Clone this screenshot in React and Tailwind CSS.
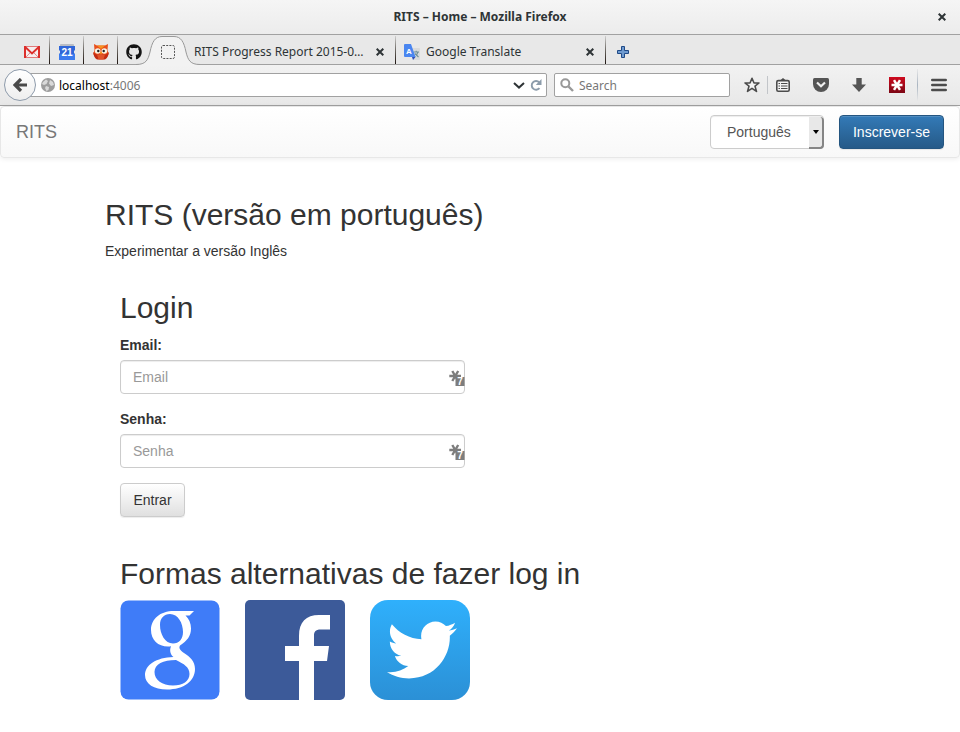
import React from "react";
import { FaGithub, FaTwitter } from "react-icons/fa";

function TabDivider() {
  return <span className="h-7 w-px shrink-0 bg-linear-to-b from-[#cfcfcf] via-[#6b6762] to-[#1f1611]" />;
}

function CloseIcon({ className }) {
  return (
    <svg viewBox="0 0 8 8" className={className} aria-hidden="true">
      <path d="M.7 .7L7.3 7.3M7.3 .7L.7 7.3" stroke="currentColor" strokeWidth="2" fill="none" />
    </svg>
  );
}

function GmailIcon() {
  return (
    <svg viewBox="0 0 16 12" className="h-3 w-4" aria-hidden="true">
      <rect width="16" height="12" rx="1" fill="#f6eeee" />
      <path d="M.3 .5H15.7M.3 11.5H15.7" stroke="#e2797a" strokeWidth="1" />
      <path d="M2 11L6.3 6.6M14 11L9.7 6.6" stroke="#e08a8a" strokeWidth="1" />
      <path d="M1 0V12M15 0V12" stroke="#dc2f2b" strokeWidth="2" />
      <path d="M1.2 1L8 7.4L14.8 1" stroke="#dc2f2b" strokeWidth="1.9" fill="none" />
    </svg>
  );
}

function CalendarIcon() {
  return (
    <svg viewBox="0 0 16 16" className="size-4" aria-hidden="true">
      <rect x="1" y="0" width="14" height="4" rx="1" fill="#b9bdc4" />
      <path d="M0 2H16V6L15 7V9L16 10V15Q16 16 15 16H1Q0 16 0 15V10L1 9V7L0 6Z" fill="#2f66d8" />
      <path d="M0 10H16V15Q16 16 15 16H1Q0 16 0 15Z" fill="#3c7bee" />
      <text x="8" y="12" textAnchor="middle" fontSize="10" fontWeight="700" fill="#fff" fontFamily="Liberation Sans, sans-serif">21</text>
    </svg>
  );
}

function OwlIcon() {
  return (
    <svg viewBox="0 0 16 16" className="size-4" aria-hidden="true">
      <path d="M1 0L4 1.5H12L15 0L14.5 6L15.5 10L13.5 14H2.5L.5 10L1.5 6Z" fill="#e8501c" />
      <path d="M4 1.5L8 5L12 1.5Z" fill="#f7931e" />
      <path d="M0 8Q1 14 4 15.5H12Q15 14 16 8L13 10.5H3Z" fill="#c22a12" />
      <path d="M4 10.5H12L10.5 15.5H5.5Z" fill="#e0532a" />
      <circle cx="4.7" cy="7" r="2.8" fill="#fbf3e4" />
      <circle cx="11.3" cy="7" r="2.8" fill="#fbf3e4" />
      <circle cx="5.3" cy="7" r="1.2" fill="#222" />
      <circle cx="10.7" cy="7" r="1.2" fill="#222" />
      <path d="M7 8H9L8 11Z" fill="#f5a623" />
    </svg>
  );
}

function TranslateIcon() {
  return (
    <svg viewBox="0 0 16 16" className="size-4" aria-hidden="true">
      <path d="M7 4H15Q16 4 16 5V15Q16 16 15 16H9Z" fill="#d9dadb" />
      <path d="M9.5 8H15M12.2 6.8V8M14 8Q13 11.5 10 13M10.8 9.5L14.5 13" stroke="#6f8f98" strokeWidth="1.1" fill="none" />
      <path d="M8 13H11.5L9 16Z" fill="#2f4fb8" />
      <path d="M1 0H7L11.5 13H1Q0 13 0 12V1Q0 0 1 0Z" fill="#4a86f0" />
      <text x="4.8" y="9.5" textAnchor="middle" fontSize="8" fontWeight="700" fill="#fff" fontFamily="Liberation Sans, sans-serif">A</text>
    </svg>
  );
}

function TabStrip() {
  return (
    <div className="flex h-[30px] items-center border-b border-[#a1a1a1] bg-[#e8e8e8] text-xs text-[#2e3436]">
      <button aria-label="Gmail" className="flex w-[49px] shrink-0 justify-end pt-1 pr-[9px]"><GmailIcon /></button>
      <TabDivider />
      <button aria-label="Calendar" className="flex w-[33px] shrink-0 justify-center pt-1"><CalendarIcon /></button>
      <TabDivider />
      <button aria-label="Hootsuite" className="flex w-[33px] shrink-0 justify-center pt-1"><OwlIcon /></button>
      <TabDivider />
      <button aria-label="GitHub" className="flex w-8 shrink-0 justify-center pt-1 text-[#141414]"><FaGithub className="size-4" /></button>
      <button aria-label="RITS" className="relative flex h-[30px] w-9 shrink-0 items-center justify-center pt-1">
        <svg viewBox="0 0 64 30" className="absolute -left-3.5 top-0 h-[30px] w-16 max-w-none" aria-hidden="true">
          <path d="M0 29.5C10 29.5 12 25 14 17C16 7 19 1.5 26 1.5H38C45 1.5 48 7 50 17C52 25 54 29.5 64 29.5V30H0Z" fill="#f2f2f2" />
          <path d="M0 29.5C10 29.5 12 25 14 17C16 7 19 1.5 26 1.5H38C45 1.5 48 7 50 17C52 25 54 29.5 64 29.5" fill="none" stroke="#999" />
        </svg>
        <svg viewBox="0 0 14 14" className="relative size-3.5" aria-hidden="true">
          <rect x=".5" y=".5" width="13" height="13" rx="1.5" fill="none" stroke="#555" strokeDasharray="2 1.2" />
        </svg>
      </button>
      <div className="flex w-[209px] shrink-0 items-center pt-1 pl-2">
        <span className="min-w-0 flex-1 truncate">RITS Progress Report 2015-0…</span>
        <button aria-label="Close tab" className="mx-[11px]"><CloseIcon className="size-2" /></button>
      </div>
      <TabDivider />
      <div className="flex w-[209px] shrink-0 items-center pt-1 pl-2">
        <TranslateIcon />
        <span className="ml-1.5 min-w-0 flex-1 truncate">Google Translate</span>
        <button aria-label="Close tab" className="mx-[11px]"><CloseIcon className="size-2" /></button>
      </div>
      <TabDivider />
      <button aria-label="New tab" className="ml-[11px] pt-1">
        <svg viewBox="0 0 12 12" className="size-3" aria-hidden="true">
          <path d="M4.5 .5H7.5V4.5H11.5V7.5H7.5V11.5H4.5V7.5H.5V4.5H4.5Z" fill="#6f9bd0" stroke="#204a87" />
        </svg>
      </button>
    </div>
  );
}

function Toolbar() {
  return (
    <div className="flex h-[41px] items-center border-b border-[#a1a1a1] bg-linear-to-b from-[#f2f2f2] to-[#e8e8e8] pl-1 text-xs text-[#4c4c4c]">
      <button aria-label="Back" className="z-10 flex size-8 shrink-0 items-center justify-center rounded-full border border-[#8e9bab] bg-linear-to-b from-white to-[#eeeeee]">
        <svg viewBox="0 0 14 14" className="size-3.5" aria-hidden="true">
          <path d="M8 1L2 7L8 13M2.5 7H14" fill="none" stroke="#4a4a4a" strokeWidth="3.2" />
        </svg>
      </button>
      <div className="-ml-2 flex h-6 min-w-0 flex-1 items-center rounded-r-xs border border-[#a1a1a1] bg-white pl-3">
        <svg viewBox="0 0 14 14" className="size-3.5 shrink-0" aria-hidden="true">
          <circle cx="7" cy="7" r="7" fill="#9d9d9d" />
          <path d="M2 4L5 1.5L7 3L5.5 6L3 7L1 6ZM9 2L12 4L13 7L10 8L8 5.5ZM5 8L8 9L7.5 12L5.5 13L4 10Z" fill="#d9d9d9" />
        </svg>
        <span className="ml-1 flex-1 pt-0.5 text-[#777]"><span className="text-black">localhost</span>:4006</span>
        <svg viewBox="0 0 12 7" className="h-[7px] w-3" aria-hidden="true">
          <path d="M1 1L6 5.6L11 1" fill="none" stroke="#2e3436" strokeWidth="2" />
        </svg>
        <button aria-label="Reload" className="mr-1 ml-[5px]">
          <svg viewBox="0 0 12 12" className="size-3" aria-hidden="true">
            <path d="M9.5 9.2A4.4 4.4 0 1 1 9.2 3.2" fill="none" stroke="#8c9cab" strokeWidth="1.9" />
            <path d="M11.5 0V6H5.8Z" fill="#8c9cab" />
          </svg>
        </button>
      </div>
      <label className="ml-[7px] flex h-6 w-44 shrink-0 items-center rounded-xs border border-[#a1a1a1] bg-white pl-[5px]">
        <svg viewBox="0 0 14 14" className="size-3.5 shrink-0" aria-hidden="true">
          <circle cx="5.3" cy="5.3" r="4" fill="none" stroke="#999" strokeWidth="2" />
          <path d="M8.5 8.5L13 13" stroke="#999" strokeWidth="2.4" />
        </svg>
        <input aria-label="Search" placeholder="Search" className="ml-[5px] w-full min-w-0 pt-0.5 outline-none placeholder:text-[#777]" />
      </label>
      <button aria-label="Bookmark" className="ml-3.5">
        <svg viewBox="0 0 16 16" className="size-4" aria-hidden="true">
          <path d="M8 1.3L10 6H15L11 9.2L12.5 14.4L8 11.4L3.5 14.4L5 9.2L1 6H6Z" fill="#f4f4f4" stroke="#4c4c4c" strokeWidth="1.6" strokeLinejoin="round" />
        </svg>
      </button>
      <span className="ml-[7px] h-[18px] w-px bg-[#c2c5c9]" />
      <button aria-label="Bookmarks list" className="ml-2">
        <svg viewBox="0 0 14 14" className="size-3.5" aria-hidden="true">
          <path d="M4 2.5L7 .1L10 2.5" fill="#4c4c4c" />
          <rect x=".8" y="2.6" width="12.4" height="10.6" rx="1.4" fill="#f4f4f4" stroke="#4c4c4c" strokeWidth="1.6" />
          <path d="M2.5 5.5H4M5 5.5H11.5M2.5 8H4M5 8H11.5M2.5 10.5H4M5 10.5H11.5" stroke="#4c4c4c" strokeWidth="1.2" />
        </svg>
      </button>
      <button aria-label="Pocket" className="ml-[23px]">
        <svg viewBox="0 0 16 14" className="h-3.5 w-4" aria-hidden="true">
          <path d="M1.5 0H14.5Q16 0 16 1.5V6A8 8 0 0 1 0 6V1.5Q0 0 1.5 0Z" fill="#555" />
          <path d="M4 4.5L8 8.3L12 4.5" fill="none" stroke="#f0f0f0" strokeWidth="2.2" />
        </svg>
      </button>
      <button aria-label="Downloads" className="ml-[23px]">
        <svg viewBox="0 0 14 14" className="size-3.5" aria-hidden="true">
          <path d="M4.3 0H9.7V6.5H14L7 14L0 6.5H4.3Z" fill="#555" />
        </svg>
      </button>
      <button aria-label="LastPass" className="ml-[23px] flex size-4 items-center justify-center bg-linear-to-b from-[#cf0a1e] to-[#7c0614]">
        <svg viewBox="0 0 12 12" className="size-3" aria-hidden="true">
          <path d="M.5 6H11.5M3 1.2L9 10.8M9 1.2L3 10.8" stroke="#fff" strokeWidth="2.5" />
        </svg>
      </button>
      <span className="ml-3 h-8 w-px bg-linear-to-b from-[#e8e8e8] via-[#a9b4c0] to-[#e8e8e8]" />
      <button aria-label="Menu" className="mr-[13px] ml-[13px]">
        <svg viewBox="0 0 16 14" className="h-3.5 w-4" aria-hidden="true">
          <path d="M1.3 2H14.7M1.3 7H14.7M1.3 12H14.7" stroke="#4c4c4c" strokeWidth="2.6" strokeLinecap="round" />
        </svg>
      </button>
    </div>
  );
}

function Navbar() {
  return (
    <nav className="flex h-[52px] items-center rounded-sm border border-[#e7e7e7] bg-linear-to-b from-white to-[#f8f8f8] px-[15px] shadow-[0_1px_5px_rgba(0,0,0,0.075)]">
      <a href="#" className="flex-1 text-lg text-[#777]">RITS</a>
      <div className="relative">
        <select aria-label="Idioma" className="h-[34px] w-[114px] appearance-none rounded-sm border border-[#ccc] bg-white pl-4 text-sm text-[#555] shadow-[inset_0_1px_1px_rgba(0,0,0,0.075)]">
          <option>Português</option>
          <option>English</option>
        </select>
        <span className="pointer-events-none absolute top-0.5 right-0 flex h-8 w-[15px] items-center justify-center rounded-r-sm border-r-2 border-b-2 border-[#858585] bg-[#e8e8e8]">
          <span className="border-x-3 border-t-4 border-x-transparent border-t-black" />
        </span>
      </div>
      <button className="ml-[15px] h-[34px] w-[105px] rounded-sm border border-[#245580] bg-linear-to-b from-[#337ab7] to-[#265a88] text-sm text-white shadow-[inset_0_1px_0_rgba(255,255,255,0.15),0_1px_1px_rgba(0,0,0,0.075)]">
        Inscrever-se
      </button>
    </nav>
  );
}

function Field({ id, label, type }) {
  return (
    <div className="mb-[15px]">
      <label htmlFor={id} className="mb-[5px] block text-sm font-bold">{label}:</label>
      <div className="relative">
        <input
          id={id}
          type={type}
          placeholder={label}
          className="block h-[34px] w-full rounded-sm border border-[#ccc] bg-white px-3 text-sm shadow-[inset_0_1px_1px_rgba(0,0,0,0.075)] outline-none placeholder:text-[#999]"
        />
        <svg viewBox="0 0 16 16" className="absolute top-2.5 right-0 size-4" aria-hidden="true">
          <path d="M.3 6H12M3.3 1L9.2 11M9.2 1L3.3 11" stroke="#7d7d7d" strokeWidth="2.4" />
          <rect x="6.5" y="7" width="9" height="9" fill="#7d7d7d" />
          <text x="11" y="15" textAnchor="middle" fontSize="10" fontWeight="700" fill="#fff" fontFamily="Liberation Sans, sans-serif">7</text>
        </svg>
      </div>
    </div>
  );
}

function GoogleLogo() {
  return (
    <svg viewBox="0 0 100 100" className="size-[100px]" aria-hidden="true">
      <rect x=".5" y=".5" width="99" height="99" rx="8" fill="#3f7cf8" />
      <path
        fill="#fff"
        fillRule="evenodd"
        d="M74 11H54C40 11 31 19 31 30C31 40 38 46.500 48 46.500C49.500 46.500 50.500 46.300 51 46.200C49.500 50 50 54 53.500 57C36 57.500 25 65 25 75C25 84 34 89.500 47 89.500C64 89.500 75 81 75 69C75 61 70 57 64 53C60 50 58.500 48 60 45.500C67 41 71 36 71 28.500C71 23 69 19 65.500 15.500H69.500ZM50 14C58 14 63 23 63 32C63 39 59 43.500 53 43.500C45 43.500 40 34 40 25C40 18 44 14 50 14ZM56 60C64 64 69.500 67 69.500 74C69.500 81 63 85.500 53 85.500C42 85.500 34.500 80 34.500 72C34.500 64 43 60 56 60Z"
      />
    </svg>
  );
}

function FacebookLogo() {
  return (
    <svg viewBox="0 0 100 100" className="size-[100px]" aria-hidden="true">
      <rect width="100" height="100" rx="5" fill="#3c5a99" />
      <path d="M54 100V61H40V46H54V36C54 22 61 15 74 15H85V29.500H76C70 29.500 69 32 69 36V46H84L82 61H69V100Z" fill="#fff" />
    </svg>
  );
}

function TwitterLogo() {
  return (
    <span className="flex size-[100px] items-center justify-center rounded-[18px] bg-linear-to-b from-[#2fb0fc] to-[#2b90d6] pl-1 text-white">
      <FaTwitter className="size-[70px]" />
    </span>
  );
}

export default function App() {
  return (
    <div className="min-h-screen bg-white font-['Liberation_Sans',Arial,sans-serif] text-[#333]">
      <header className="font-['Noto_Sans',sans-serif]">
        <div className="flex h-[35px] items-center border-b border-[#a1a1a1] bg-linear-to-b from-[#f5f5f5] to-[#ececec] text-[#2e3436]">
          <span className="w-9" />
          <span className="flex-1 text-center text-xs font-bold">RITS – Home – Mozilla Firefox</span>
          <button aria-label="Close window" className="flex w-9 justify-center"><CloseIcon className="size-2" /></button>
        </div>
        <TabStrip />
        <Toolbar />
      </header>
      <Navbar />
      <main className="mx-auto mt-10 max-w-[750px]">
        <h1 className="text-3xl leading-[33px]">RITS (versão em português)</h1>
        <p className="mt-2.5 text-sm">
          <a href="#">Experimentar a versão Inglês</a>
        </p>
        <form className="mt-[30px] w-1/2 px-[15px]">
          <h2 className="mb-[11px] text-3xl leading-[33px]">Login</h2>
          <Field id="email" label="Email" type="email" />
          <Field id="senha" label="Senha" type="password" />
          <button type="button" className="h-[34px] w-[65px] rounded-sm border border-[#ccc] bg-linear-to-b from-white to-[#e0e0e0] text-sm shadow-[0_1px_1px_rgba(0,0,0,0.075)]">
            Entrar
          </button>
        </form>
        <section className="mt-10 px-[15px]">
          <h2 className="text-3xl leading-[33px]">Formas alternativas de fazer log in</h2>
          <div className="mt-2.5 flex gap-[25px]">
            <a href="#" aria-label="Google"><GoogleLogo /></a>
            <a href="#" aria-label="Facebook"><FacebookLogo /></a>
            <a href="#" aria-label="Twitter"><TwitterLogo /></a>
          </div>
        </section>
      </main>
    </div>
  );
}
